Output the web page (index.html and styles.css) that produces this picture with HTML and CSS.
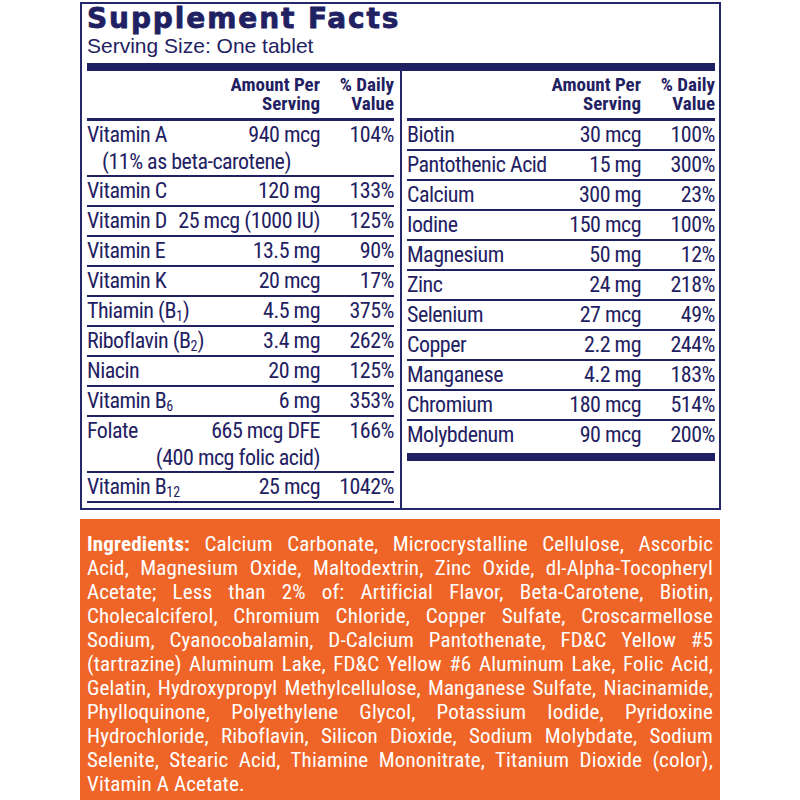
FILE: index.html
```html
<!DOCTYPE html>
<html lang="en">
<head>
<meta charset="utf-8">
<title>Supplement Facts</title>
<link rel="stylesheet" href="styles.css">
</head>
<body>
<div class="label">
  <h1 class="title">Supplement Facts</h1>
  <div class="serving">Serving Size: One tablet</div>
  <div class="bar"></div>
  <div class="cols">
    <div class="col col-left">
      <div class="row head"><span></span><span class="amt">Amount Per<br>Serving</span><span class="dv">% Daily<br>Value</span></div>
      <div class="row"><span class="name">Vitamin A</span><span class="amt">940 mcg</span><span class="dv">104%</span><span class="note indent">(11% as beta-carotene)</span></div>
      <div class="row"><span class="name">Vitamin C</span><span class="amt">120 mg</span><span class="dv">133%</span></div>
      <div class="row"><span class="name">Vitamin D</span><span class="amt">25 mcg (1000 IU)</span><span class="dv">125%</span></div>
      <div class="row"><span class="name">Vitamin E</span><span class="amt">13.5 mg</span><span class="dv">90%</span></div>
      <div class="row"><span class="name">Vitamin K</span><span class="amt">20 mcg</span><span class="dv">17%</span></div>
      <div class="row"><span class="name">Thiamin (B<sub>1</sub>)</span><span class="amt">4.5 mg</span><span class="dv">375%</span></div>
      <div class="row"><span class="name">Riboflavin (B<sub>2</sub>)</span><span class="amt">3.4 mg</span><span class="dv">262%</span></div>
      <div class="row"><span class="name">Niacin</span><span class="amt">20 mg</span><span class="dv">125%</span></div>
      <div class="row"><span class="name">Vitamin B<sub>6</sub></span><span class="amt">6 mg</span><span class="dv">353%</span></div>
      <div class="row"><span class="name">Folate</span><span class="amt">665 mcg DFE</span><span class="dv">166%</span><span class="note right">(400 mcg folic acid)</span></div>
      <div class="row"><span class="name">Vitamin B<sub>12</sub></span><span class="amt">25 mcg</span><span class="dv">1042%</span></div>
    </div>
    <div class="col col-right">
      <div class="row head"><span></span><span class="amt">Amount Per<br>Serving</span><span class="dv">% Daily<br>Value</span></div>
      <div class="row"><span class="name">Biotin</span><span class="amt">30 mcg</span><span class="dv">100%</span></div>
      <div class="row"><span class="name">Pantothenic Acid</span><span class="amt">15 mg</span><span class="dv">300%</span></div>
      <div class="row"><span class="name">Calcium</span><span class="amt">300 mg</span><span class="dv">23%</span></div>
      <div class="row"><span class="name">Iodine</span><span class="amt">150 mcg</span><span class="dv">100%</span></div>
      <div class="row"><span class="name">Magnesium</span><span class="amt">50 mg</span><span class="dv">12%</span></div>
      <div class="row"><span class="name">Zinc</span><span class="amt">24 mg</span><span class="dv">218%</span></div>
      <div class="row"><span class="name">Selenium</span><span class="amt">27 mcg</span><span class="dv">49%</span></div>
      <div class="row"><span class="name">Copper</span><span class="amt">2.2 mg</span><span class="dv">244%</span></div>
      <div class="row"><span class="name">Manganese</span><span class="amt">4.2 mg</span><span class="dv">183%</span></div>
      <div class="row"><span class="name">Chromium</span><span class="amt">180 mcg</span><span class="dv">514%</span></div>
      <div class="row last"><span class="name">Molybdenum</span><span class="amt">90 mcg</span><span class="dv">200%</span></div>
      <div class="endbar"></div>
    </div>
  </div>
</div>
<div class="ingredients">
  <span class="ln"><b>Ingredients:</b> Calcium Carbonate, Microcrystalline Cellulose, Ascorbic</span>
  <span class="ln">Acid, Magnesium Oxide, Maltodextrin, Zinc Oxide, dl-Alpha-Tocopheryl</span>
  <span class="ln">Acetate; Less than 2% of: Artificial Flavor, Beta-Carotene, Biotin,</span>
  <span class="ln">Cholecalciferol, Chromium Chloride, Copper Sulfate, Croscarmellose</span>
  <span class="ln">Sodium, Cyanocobalamin, D-Calcium Pantothenate, FD&amp;C Yellow #5</span>
  <span class="ln">(tartrazine) Aluminum Lake, FD&amp;C Yellow #6 Aluminum Lake, Folic Acid,</span>
  <span class="ln">Gelatin, Hydroxypropyl Methylcellulose, Manganese Sulfate, Niacinamide,</span>
  <span class="ln">Phylloquinone, Polyethylene Glycol, Potassium Iodide, Pyridoxine</span>
  <span class="ln">Hydrochloride, Riboflavin, Silicon Dioxide, Sodium Molybdate, Sodium</span>
  <span class="ln">Selenite, Stearic Acid, Thiamine Mononitrate, Titanium Dioxide (color),</span>
  <span class="ln end">Vitamin A Acetate.</span>
</div>
</body>
</html>
```

FILE: styles.css
```css
* {
  box-sizing: border-box;
  margin: 0;
  padding: 0;
}

body {
  margin: 0;
  background: #ffffff;
  color: #1f2162;
  font-family: "Liberation Sans", Arial, sans-serif;
}

.label {
  margin: 2px 0 0 80px;
  width: 641px;
  border: 2px solid #25276b;
  padding: 1px 4px 0 5px;
}

.title {
  font-family: "DejaVu Sans", sans-serif;
  font-weight: bold;
  font-size: 28px;
  line-height: 28px;
  letter-spacing: 1.9px;
  -webkit-text-stroke: 0.8px #1f2162;
  color: #1f2162;
}

.serving {
  margin-top: 1px;
  font-size: 21px;
  line-height: 24px;
}

.bar {
  margin-top: 5px;
  height: 8px;
  background: #1f2162;
}

.cols {
  display: grid;
  grid-template-columns: 315px 1fr;
}

.col-left {
  padding-right: 6px;
  padding-bottom: 5px;
  border-right: 2px solid #25276b;
}

.col-right {
  padding-left: 5px;
}

.row {
  display: grid;
  grid-template-columns: 1fr auto 74px;
  font-family: "Roboto", sans-serif;
  font-stretch: 75%;
  font-size: 22px;
  line-height: 28px;
  letter-spacing: -0.5px;
  border-bottom: 2px solid #1f2162;
  white-space: nowrap;
}

.row.last {
  border-bottom: none;
}

.row .amt,
.row .dv {
  text-align: right;
}

.row .note {
  grid-column: 1 / 3;
  line-height: 26px;
}

.row .note.indent {
  padding-left: 15px;
}

.row .note.right {
  text-align: right;
}

.row.head {
  font-weight: bold;
  font-size: 19px;
  line-height: 19px;
  letter-spacing: 0;
  padding: 4px 0 5px;
  border-bottom-width: 3px;
}

sub {
  font-size: 14px;
  line-height: 0;
  vertical-align: -3px;
  letter-spacing: 0;
}

.endbar {
  margin-top: 4px;
  height: 8px;
  background: #1f2162;
}

.ingredients {
  margin: 9px 0 0 80px;
  width: 640px;
  background: #ef6528;
  color: #ffffff;
  padding: 13px 7px 12px 7px;
  font-family: "Roboto", sans-serif;
  font-stretch: 75%;
  font-size: 21px;
  line-height: 24px;
  letter-spacing: 0.15px;
}

.ln {
  display: block;
  text-align: justify;
  text-align-last: justify;
}

.ln.end {
  text-align-last: left;
}
```
